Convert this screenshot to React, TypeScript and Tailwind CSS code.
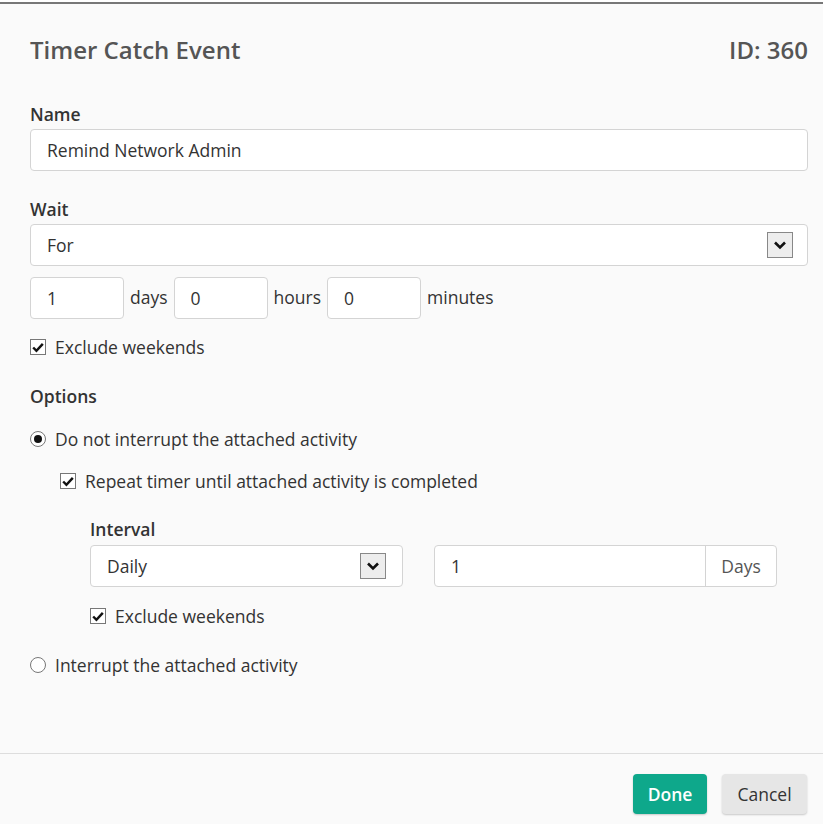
import React from 'react';

function Check() {
    return (
        <span className="flex h-[16px] w-[16px] shrink-0 items-center justify-center border border-[#777] bg-white">
            <svg viewBox="0 0 16 16" className="h-[15px] w-[15px]">
                <path d="M2.5 8 L6.2 11.8 L13.5 3.8" fill="none" stroke="#111" strokeWidth="2.8" />
            </svg>
        </span>
    );
}

function Radio({ on }: { on?: boolean }) {
    return (
        <span className="flex h-[16px] w-[16px] shrink-0 items-center justify-center rounded-full border border-[#777] bg-white">
            {on && <span className="h-[8px] w-[8px] rounded-full bg-[#111]" />}
        </span>
    );
}

function Arrow() {
    return (
        <span className="flex h-[26px] w-[26px] items-center justify-center border border-[#888] bg-[#ededed]">
            <svg viewBox="0 0 16 16" className="h-[16px] w-[16px]">
                <path d="M3 5.5 L8 10.5 L13 5.5" fill="none" stroke="#111" strokeWidth="2.6" />
            </svg>
        </span>
    );
}

const box = 'flex h-[42px] items-center rounded border border-[#d4d4d4] bg-white px-[16px] text-[#333]';

export default function App() {
    return (
        <div className="mt-[2px] flex h-[822px] w-[823px] flex-col border-t-[2px] border-[#777] bg-[#fafafa] text-[17.5px] leading-[24px] text-[#333] [font-family:'Open_Sans',sans-serif]">
            <div className="flex items-center justify-between pl-[30px] pr-[15px] pt-[30px] text-[24px] leading-[32px] font-semibold text-[#555]">
                <span>Timer Catch Event</span>
                <span>ID: 360</span>
            </div>

            <div className="flex flex-1 flex-col pl-[30px] pr-[15px]">
                <div className="mt-[36px] mb-[3px] font-semibold">Name</div>
                <div className={box}>Remind Network Admin</div>

                <div className="mt-[26px] mb-[3px] font-semibold">Wait</div>
                <div className={`${box} justify-between pr-[14px]`}>
                    <span>For</span>
                    <Arrow />
                </div>

                <div className="mt-[11px] flex items-center gap-[6px]">
                    <div className={`${box} w-[94px]`}>1</div>
                    <span className="-mt-[3px]">days</span>
                    <div className={`${box} w-[94px]`}>0</div>
                    <span className="-mt-[3px]">hours</span>
                    <div className={`${box} w-[94px]`}>0</div>
                    <span className="-mt-[3px]">minutes</span>
                </div>

                <label className="mt-[16px] flex items-center gap-[9px]">
                    <Check />
                    <span>Exclude weekends</span>
                </label>

                <div className="mt-[25px] font-semibold">Options</div>

                <label className="mt-[19px] flex items-center gap-[9px]">
                    <Radio on />
                    <span>Do not interrupt the attached activity</span>
                </label>

                <label className="mt-[18px] ml-[30px] flex items-center gap-[9px]">
                    <Check />
                    <span>Repeat timer until attached activity is completed</span>
                </label>

                <div className="ml-[60px] mt-[24px]">
                    <div className="mb-[4px] font-semibold">Interval</div>
                    <div className="flex gap-[31px]">
                        <div className={`${box} w-[313px] justify-between pr-[16px]`}>
                            <span>Daily</span>
                            <Arrow />
                        </div>
                        <div className="flex h-[42px] w-[343px] rounded border border-[#d4d4d4] bg-white">
                            <div className="flex flex-1 items-center px-[16px]">1</div>
                            <div className="flex w-[71px] items-center justify-center border-l border-[#d4d4d4] text-[#555]">Days</div>
                        </div>
                    </div>
                    <label className="mt-[17px] flex items-center gap-[9px]">
                        <Check />
                        <span>Exclude weekends</span>
                    </label>
                </div>

                <label className="mt-[25px] flex items-center gap-[9px]">
                    <Radio />
                    <span>Interrupt the attached activity</span>
                </label>
            </div>

            <div className="flex justify-end gap-[15px] border-t border-[#ddd] pr-[16px] pt-[20px] pb-[10px]">
                <button className="h-[40px] w-[74px] rounded bg-[#0ea88b] font-semibold text-white shadow-[0_1px_2px_rgba(0,0,0,0.2)]">
                    Done
                </button>
                <button className="h-[40px] w-[85px] rounded bg-[#e6e6e6] text-[#333] shadow-[0_1px_2px_rgba(0,0,0,0.2)]">
                    Cancel
                </button>
            </div>
        </div>
    );
}
